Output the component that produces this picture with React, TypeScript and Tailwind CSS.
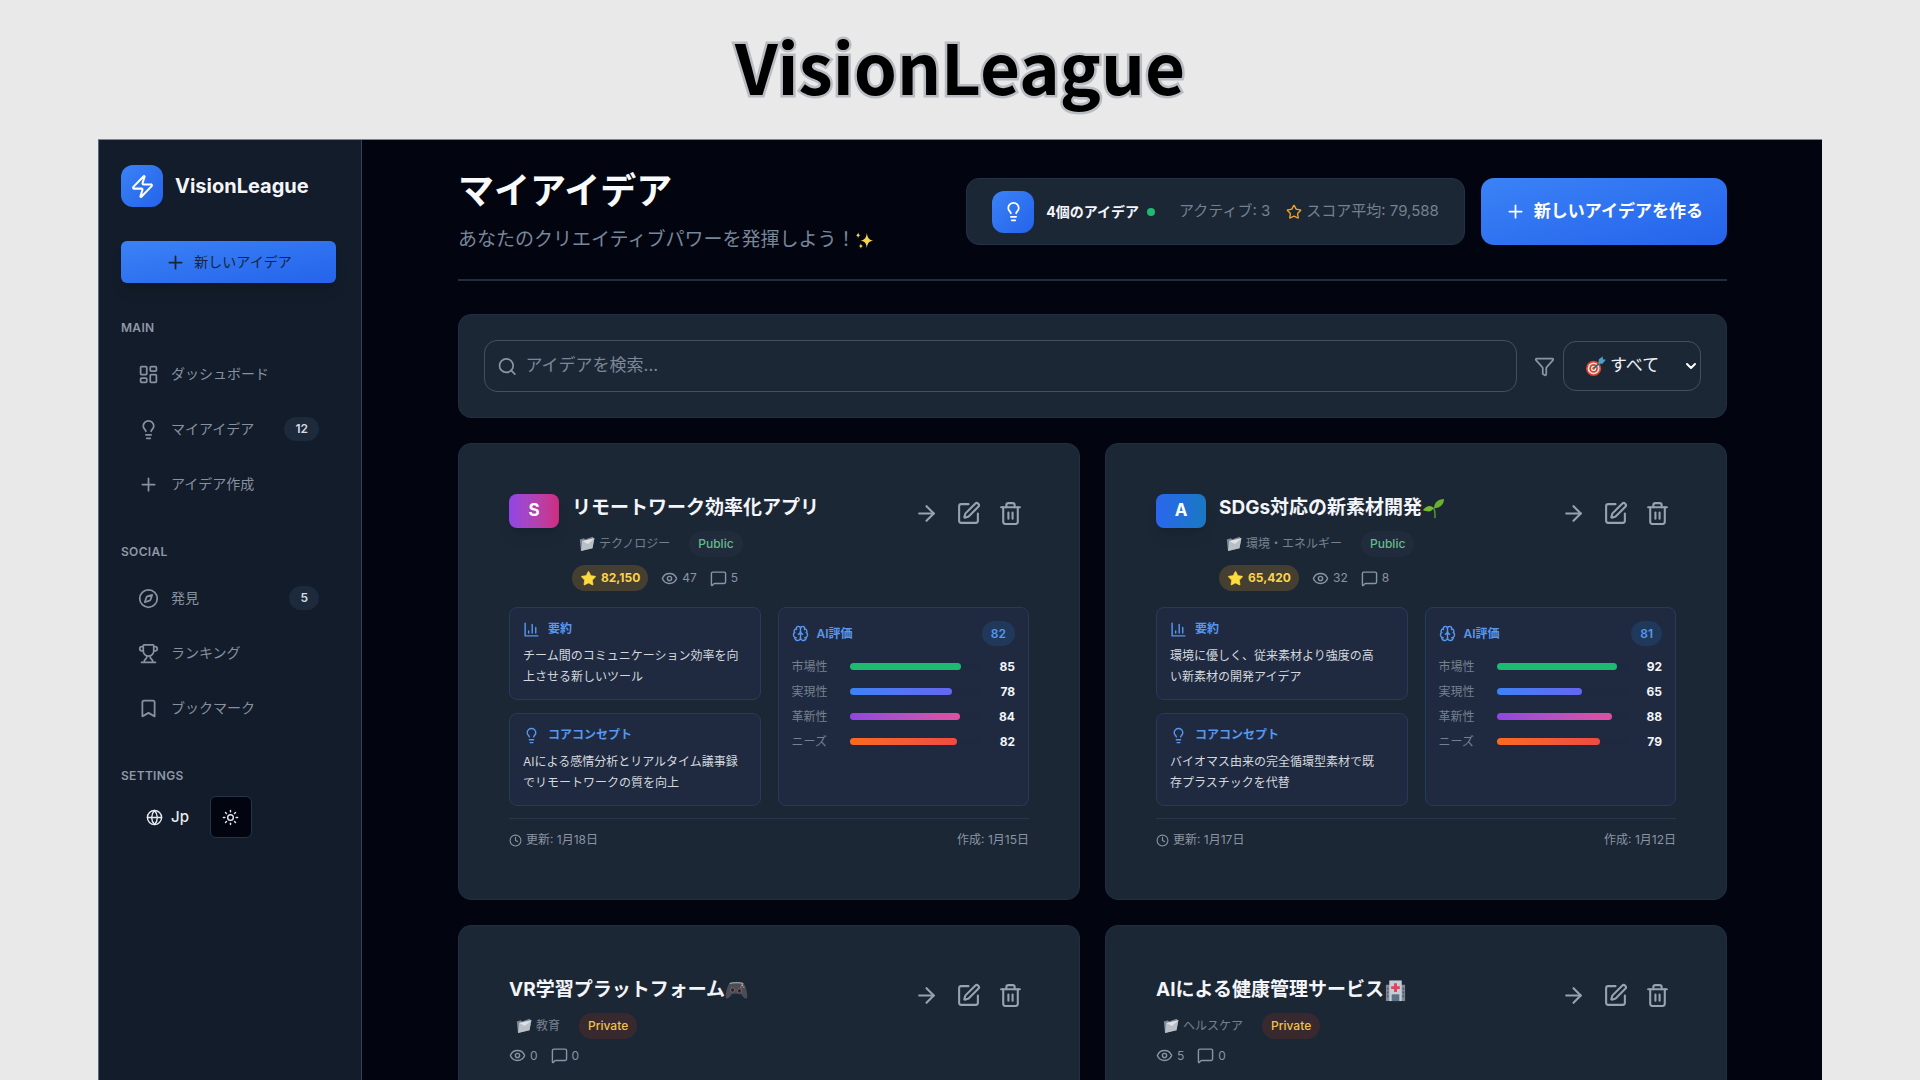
import React from "react";
import {
  ArrowRight,
  Bookmark,
  Brain,
  ChevronDown,
  Clock,
  Compass,
  Eye,
  Funnel,
  Globe,
  LayoutDashboard,
  Lightbulb,
  MessageSquare,
  Plus,
  Search,
  SquarePen,
  Star,
  Sun,
  Trash2,
  Trophy,
  Zap,
  type LucideIcon,
} from "lucide-react";

type NavItem = { icon: LucideIcon; label: string; badge?: string };

type Idea = {
  rank?: { letter: string; tone: string };
  title: string;
  emoji?: React.ReactNode;
  category: string;
  visibility: "Public" | "Private";
  score?: string;
  views: number;
  comments: number;
  detail?: {
    summary: string;
    concept: string;
    total: number;
    scores: [number, number, number, number];
    updated: string;
    created: string;
  };
};

function Sparkles() {
  return (
    <svg viewBox="0 0 20 20" className="size-[19px]" aria-hidden="true">
      <g fill="#fcd34d">
        <path d="M12.5 2c.7 5 2 7 6.500 8-4.500 1-5.800 3-6.500 8-.7-5-2-7-6.500-8 4.500-1 5.800-3 6.500-8z" />
        <path d="M3.300 1.200c.3 2 .8 2.800 2.700 3.200-1.900.4-2.400 1.200-2.700 3.200C3 5.600 2.500 4.800.6 4.400 2.500 4 3 3.200 3.300 1.200z" />
        <path d="M6.200 12.800c.3 1.900.8 2.600 2.500 3-1.700.4-2.200 1.200-2.500 3-.3-1.800-.8-2.600-2.500-3 1.700-.4 2.200-1.100 2.500-3z" />
      </g>
    </svg>
  );
}

function Folder() {
  return (
    <svg viewBox="0 0 16 16" className="size-4 shrink-0" aria-hidden="true">
      <path d="M.8 3.500 5 2.200l1 1.200L13.500.8 15 2.300l-1.500 10L2 15z" fill="#7d8793" />
      <path d="M2 15 3.200 5 15.500 2.300 13.500 12.300z" fill="#b9bfc6" />
      <path d="M3.200 5 15.500 2.300 9 8z" fill="#dfe2e5" />
    </svg>
  );
}

function Sprout() {
  return (
    <svg viewBox="0 0 24 24" className="size-[23px]" aria-hidden="true">
      <path d="M13.500 22c.3-4 .2-8-1.500-11" fill="none" stroke="#5c9a2b" strokeWidth="1.500" />
      <path d="M12.500 11.500c.5-6 4-9 10.500-9.500-.3 5.500-3.500 9.500-10.500 9.500z" fill="#6ab02c" />
      <path d="M12 11.500C10 8.300 5 8.500 1 13.500c5 2.500 9.500 2 11-2z" fill="#74ba31" />
    </svg>
  );
}

function Gamepad() {
  return (
    <svg viewBox="0 0 24 24" className="size-[23px]" aria-hidden="true">
      <path d="M4.500 4.500c3-1.500 12-1.500 15 0 2 3 4.500 11 3.500 15.500-2.500 1.500-5-2-6.500-4.500h-9C6 18 3.500 21.500 1 20 0 15.500 2.500 7.500 4.500 4.500z" fill="#4a4d55" />
      <path d="M5 4.800c3-1.300 11-1.300 14 0" fill="none" stroke="#9a9ca3" strokeWidth="1.200" />
      <circle cx="8" cy="11.500" r="2.300" fill="#2b2430" stroke="#7c6a68" />
      <circle cx="15" cy="12.500" r="2.300" fill="#2b2430" stroke="#7c6a68" />
      <circle cx="18" cy="6.500" r="1" fill="#e0b23c" />
      <circle cx="19.500" cy="8.500" r="1" fill="#4c83d4" />
      <circle cx="16.500" cy="8.500" r="1" fill="#d04f42" />
    </svg>
  );
}

function Hospital() {
  return (
    <svg viewBox="0 0 24 24" className="size-[23px]" aria-hidden="true">
      <path d="M2 6h20v17H2z" fill="#7f8994" />
      <path d="M5.500 1.500h13V23h-13z" fill="#c5ccd3" />
      <path d="M10.500 4.500h3v3h3v3h-3v3h-3v-3h-3v-3h3z" fill="#e0435c" />
      <path d="M8 16h8v7H8z" fill="#5d7187" />
      <path d="M3 9h1.500v2H3zm0 4h1.500v2H3zm0 4h1.500v2H3zM19.500 9H21v2h-1.500zm0 4H21v2h-1.500zm0 4H21v2h-1.500z" fill="#4b5a6b" />
    </svg>
  );
}

function Dart() {
  return (
    <svg viewBox="0 0 22 22" className="size-[21px]" aria-hidden="true">
      <circle cx="9" cy="13" r="8" fill="#d8432f" />
      <circle cx="9" cy="13" r="6.200" fill="#f3e4de" />
      <circle cx="9" cy="13" r="4.500" fill="#d8432f" />
      <circle cx="9" cy="13" r="2.700" fill="#f3e4de" />
      <circle cx="9" cy="13" r="1.300" fill="#d8432f" />
      <path d="M9 13 17 6" stroke="#3f5f73" strokeWidth="1.800" />
      <path d="m14 8 .5-4.500L18.500.5l.3 2.900 3 .6-3.500 4z" fill="#4d9fc4" />
    </svg>
  );
}

function BarChart() {
  return (
    <svg viewBox="0 0 24 24" className="size-[17px] shrink-0" fill="none" stroke="currentColor" strokeWidth="2" strokeLinecap="round" strokeLinejoin="round" aria-hidden="true">
      <path d="M3 3v18h18" />
      <path d="M8 17v-3" />
      <path d="M13 17V5" />
      <path d="M18 17V9" />
    </svg>
  );
}

const mainNav: NavItem[] = [
  { icon: LayoutDashboard, label: "ダッシュボード" },
  { icon: Lightbulb, label: "マイアイデア", badge: "12" },
  { icon: Plus, label: "アイデア作成" },
];

const socialNav: NavItem[] = [
  { icon: Compass, label: "発見", badge: "5" },
  { icon: Trophy, label: "ランキング" },
  { icon: Bookmark, label: "ブックマーク" },
];

const metrics = [
  { label: "市場性", bar: "bg-[#1dbb70]" },
  { label: "実現性", bar: "bg-linear-to-r from-[#3b82f6] to-[#6366f1]" },
  { label: "革新性", bar: "bg-linear-to-r from-[#9045e0] to-[#e04fa0]" },
  { label: "ニーズ", bar: "bg-linear-to-r from-[#fb6a1c] to-[#ee4b42]" },
];

const ideas: Idea[] = [
  {
    rank: { letter: "S", tone: "from-[#9045e6] to-[#cf2a80]" },
    title: "リモートワーク効率化アプリ",
    category: "テクノロジー",
    visibility: "Public",
    score: "82,150",
    views: 47,
    comments: 5,
    detail: {
      summary: "チーム間のコミュニケーション効率を向\n上させる新しいツール",
      concept: "AIによる感情分析とリアルタイム議事録\nでリモートワークの質を向上",
      total: 82,
      scores: [85, 78, 84, 82],
      updated: "1月18日",
      created: "1月15日",
    },
  },
  {
    rank: { letter: "A", tone: "from-[#2a66ee] to-[#1a78c2]" },
    title: "SDGs対応の新素材開発",
    emoji: <Sprout />,
    category: "環境・エネルギー",
    visibility: "Public",
    score: "65,420",
    views: 32,
    comments: 8,
    detail: {
      summary: "環境に優しく、従来素材より強度の高\nい新素材の開発アイデア",
      concept: "バイオマス由来の完全循環型素材で既\n存プラスチックを代替",
      total: 81,
      scores: [92, 65, 88, 79],
      updated: "1月17日",
      created: "1月12日",
    },
  },
  {
    title: "VR学習プラットフォーム",
    emoji: <Gamepad />,
    category: "教育",
    visibility: "Private",
    views: 0,
    comments: 0,
  },
  {
    title: "AIによる健康管理サービス",
    emoji: <Hospital />,
    category: "ヘルスケア",
    visibility: "Private",
    views: 5,
    comments: 0,
  },
];

function NavSection({ title, items }: { title: string; items: NavItem[] }) {
  return (
    <section className="mb-[38px]">
      <h2 className="mb-[17px] text-xs leading-[17px] font-semibold tracking-wide text-[#8e98a7]">{title}</h2>
      <ul className="flex flex-col gap-[13px]">
        {items.map(({ icon: Icon, label, badge }) => (
          <li key={label}>
            <a href="#" className="flex h-[42px] items-center gap-3 px-[17px] text-sm text-[#8791a0]">
              <Icon className="size-[21px]" strokeWidth={2} />
              <span>{label}</span>
              {badge && (
                <span className="ml-auto rounded-full bg-[#1d2a3b] px-[11px] text-xs leading-6 font-semibold text-[#d5dae1]">
                  {badge}
                </span>
              )}
            </a>
          </li>
        ))}
      </ul>
    </section>
  );
}

function Sidebar() {
  return (
    <aside className="w-[264px] shrink-0 border-r border-l border-r-[#364456] border-l-[#5b697b] bg-[#131c2a] pt-[25px] pr-[25px] pl-[22px]">
      <div className="mb-[34px] flex items-center gap-3">
        <span className="grid size-[42px] place-items-center rounded-xl bg-linear-to-br from-[#3b82f6] to-[#2563eb] text-white">
          <Zap className="size-[25px]" strokeWidth={2} />
        </span>
        <span className="text-xl font-bold text-[#f3f5f8]">VisionLeague</span>
      </div>
      <button type="button" className="mb-9 flex h-[42px] w-full items-center justify-center gap-2 rounded-md bg-linear-to-br from-[#3b82f6] to-[#2563eb] text-sm text-[#17243a] shadow-lg">
        <Plus className="size-[21px]" strokeWidth={2} />
        新しいアイデア
      </button>
      <nav>
        <NavSection title="MAIN" items={mainNav} />
        <NavSection title="SOCIAL" items={socialNav} />
      </nav>
      <h2 className="mb-3 text-xs leading-[17px] font-semibold tracking-wide text-[#8e98a7]">SETTINGS</h2>
      <div className="flex gap-[21px] pl-[25px]">
        <button type="button" className="flex h-[42px] items-center gap-2 text-[15px] font-medium text-[#e6e9ee]">
          <Globe className="size-[17px]" strokeWidth={2} />
          Jp
        </button>
        <button type="button" aria-label="テーマ切替" className="grid size-[42px] place-items-center rounded-md border border-[#26334a] bg-[#02050f] text-[#dfe8f2]">
          <Sun className="size-[17px]" strokeWidth={2} />
        </button>
      </div>
    </aside>
  );
}

function PageHeader() {
  return (
    <header className="flex items-start justify-between border-b-2 border-[#222e3f] pb-[25px]">
      <div>
        <h1 className="text-4xl leading-[45px] font-bold text-[#f8fafc]">マイアイデア</h1>
        <p className="mt-3 flex items-center text-[19px] leading-7 text-[#78869a]">
          あなたのクリエイティブパワーを発揮しよう！
          <Sparkles />
        </p>
      </div>
      <div className="mt-[9px] flex gap-4">
        <div className="flex h-[67px] items-center rounded-[13px] border border-[#243245] bg-[#1c2736] px-[25px] text-[15px] text-[#75818f]">
          <span className="mr-3 grid size-[42px] place-items-center rounded-xl bg-linear-to-br from-[#3b82f6] to-[#2563eb] text-white">
            <Lightbulb className="size-[21px]" strokeWidth={2} />
          </span>
          <span className="text-sm font-bold text-[#f3f5f8]">4個のアイデア</span>
          <span className="mr-6 ml-2 size-2 rounded-full bg-[#1dbb70]" />
          <span className="mr-4">アクティブ: 3</span>
          <Star className="mr-1 size-4 text-[#f5a524]" strokeWidth={2} />
          <span>スコア平均: 79,588</span>
        </div>
        <button type="button" className="flex h-[67px] items-center gap-2 rounded-[13px] bg-linear-to-br from-[#3b82f6] to-[#2563eb] px-6 text-[17px] font-bold text-white">
          <Plus className="size-[21px]" strokeWidth={2} />
          新しいアイデアを作る
        </button>
      </div>
    </header>
  );
}

function SearchPanel() {
  return (
    <div className="mt-[33px] flex items-center rounded-[13px] border border-[#222f42] bg-[#1c2736] p-[25px]">
      <label className="flex h-[52px] flex-1 items-center gap-2 rounded-[13px] border border-[#45505f] px-3 text-[#8a94a3]">
        <Search className="size-[21px]" strokeWidth={2} />
        <input
          type="text"
          aria-label="アイデアを検索"
          placeholder="アイデアを検索..."
          className="w-full bg-transparent text-[17px] outline-none placeholder:text-[#7b8696]"
        />
      </label>
      <Funnel className="mr-2 ml-[17px] size-[21px] text-[#8a94a3]" strokeWidth={2} />
      <div className="relative flex items-center">
        <select
          aria-label="絞り込み"
          className="h-[50px] w-[138px] appearance-none rounded-[13px] border border-[#45505f] bg-transparent pl-[46px] text-[17px] text-[#eef1f5]"
        >
          <option>すべて</option>
        </select>
        <span className="pointer-events-none absolute left-[22px]">
          <Dart />
        </span>
        <ChevronDown className="pointer-events-none absolute right-0.5 size-4 text-white" strokeWidth={3} />
      </div>
    </div>
  );
}

function InfoBox({ icon, title, text }: { icon: React.ReactNode; title: string; text: string }) {
  return (
    <section className="rounded-lg border border-[#243b5c] bg-[#1f2a40] p-[13px] pb-3">
      <h4 className="mb-2 flex h-4 items-center gap-2 text-xs font-semibold text-[#5697f0]">
        {icon}
        {title}
      </h4>
      <p className="text-xs leading-[21px] whitespace-pre-line text-[#d3d8de]">{text}</p>
    </section>
  );
}

function IdeaCard({ idea }: { idea: Idea }) {
  const { detail } = idea;
  return (
    <article className="rounded-[13px] border border-[#222f42] bg-[#1c2736] p-[50px]">
      <div className="flex items-start">
        {idea.rank && (
          <span className={`mr-[13px] grid h-[34px] w-[50px] place-items-center rounded-lg bg-linear-to-r text-[17px] font-bold text-white shadow-lg ${idea.rank.tone}`}>
            {idea.rank.letter}
          </span>
        )}
        <div className="flex-1">
          <h3 className="flex h-7 items-center text-[19px] font-bold text-[#f3f5f8]">
            {idea.title}
            {idea.emoji}
          </h3>
          <div className="mt-[9px] flex h-[26px] items-center gap-3 text-xs">
            <span className="flex h-full items-center gap-1 rounded-full px-[7px] text-[#75818f]">
              <Folder />
              {idea.category}
            </span>
            {idea.visibility === "Public" ? (
              <span className="flex h-full items-center rounded-full bg-[#202b3b] px-[9px] font-medium text-[#63bd8a]">Public</span>
            ) : (
              <span className="flex h-full items-center rounded-full bg-[#38292f] px-[9px] font-medium text-[#f0c24a]">Private</span>
            )}
          </div>
          <div className="mt-2 flex items-center gap-[13px] text-xs text-[#8a94a3]">
            {idea.score && (
              <span className="flex h-[26px] items-center gap-1 rounded-full bg-[#443f30] px-2 font-bold text-[#fcd34d]">
                <Star className="size-[17px] fill-[#ffdc3e] text-[#ffdc3e]" strokeWidth={1} />
                {idea.score}
              </span>
            )}
            <span className="flex items-center gap-1">
              <Eye className="size-[17px]" strokeWidth={2} />
              {idea.views}
            </span>
            <span className="flex items-center gap-1">
              <MessageSquare className="size-[17px]" strokeWidth={2} />
              {idea.comments}
            </span>
          </div>
        </div>
        <div className="flex gap-1 text-[#98a2b0]">
          <button type="button" aria-label="詳細" className="grid size-[38px] place-items-center">
            <ArrowRight className="size-[25px]" strokeWidth={2} />
          </button>
          <button type="button" aria-label="編集" className="grid size-[38px] place-items-center">
            <SquarePen className="size-[25px]" strokeWidth={2} />
          </button>
          <button type="button" aria-label="削除" className="grid size-[38px] place-items-center">
            <Trash2 className="size-[25px]" strokeWidth={2} />
          </button>
        </div>
      </div>
      {detail && (
        <>
          <div className="mt-4 grid grid-cols-2 gap-[17px]">
            <div className="flex flex-col gap-[13px]">
              <InfoBox icon={<BarChart />} title="要約" text={detail.summary} />
              <InfoBox icon={<Lightbulb className="size-[17px]" />} title="コアコンセプト" text={detail.concept} />
            </div>
            <section className="rounded-lg border border-[#243b5c] bg-[#1f2a40] p-[13px]">
              <h4 className="mb-2 flex items-center gap-2 text-xs font-semibold text-[#5697f0]">
                <Brain className="size-[17px]" strokeWidth={2} />
                AI評価
                <span className="ml-auto rounded-full bg-[#20385a] px-[9px] leading-[25px]">{detail.total}</span>
              </h4>
              <ul>
                {metrics.map((m, i) => (
                  <li key={m.label} className="flex h-[25px] items-center text-xs">
                    <span className="w-[58px] text-[#75818f]">{m.label}</span>
                    <span className="h-[7px] flex-1 rounded-full bg-[#1e2940]">
                      <span className={`block h-full rounded-full ${m.bar}`} style={{ width: `${detail.scores[i]}%` }} />
                    </span>
                    <span className="w-[34px] text-right font-bold text-[#f3f5f8]">{detail.scores[i]}</span>
                  </li>
                ))}
              </ul>
            </section>
          </div>
          <footer className="mt-3 flex items-center justify-between border-t border-[#2b3748] pt-3 text-xs leading-[18px] text-[#8a94a3]">
            <span className="flex items-center gap-1">
              <Clock className="size-[13px]" strokeWidth={2} />
              更新: {detail.updated}
            </span>
            <span>作成: {detail.created}</span>
          </footer>
        </>
      )}
    </article>
  );
}

export default function App() {
  return (
    <div lang="ja" className="flex h-screen flex-col overflow-hidden bg-[#e9e9e9] font-['Inter','Noto_Sans_CJK_JP',sans-serif]">
      <div className="flex h-[139px] shrink-0 items-center justify-center pb-[9px]">
        <p className="font-['Noto_Sans_CJK_JP',sans-serif] text-[69px] leading-none font-bold text-black [-webkit-text-stroke:5px_#b9bdc3] [paint-order:stroke_fill]">
          VisionLeague
        </p>
      </div>
      <div className="mx-[98px] flex min-h-0 flex-1 border-t border-[#7d8590] bg-[#02050f]">
        <Sidebar />
        <main className="min-w-0 flex-1 overflow-hidden pt-[29px] pr-[95px] pl-24">
          <PageHeader />
          <SearchPanel />
          <div className="mt-[25px] grid grid-cols-2 gap-[25px]">
            {ideas.map((idea) => (
              <IdeaCard key={idea.title} idea={idea} />
            ))}
          </div>
        </main>
      </div>
    </div>
  );
}
